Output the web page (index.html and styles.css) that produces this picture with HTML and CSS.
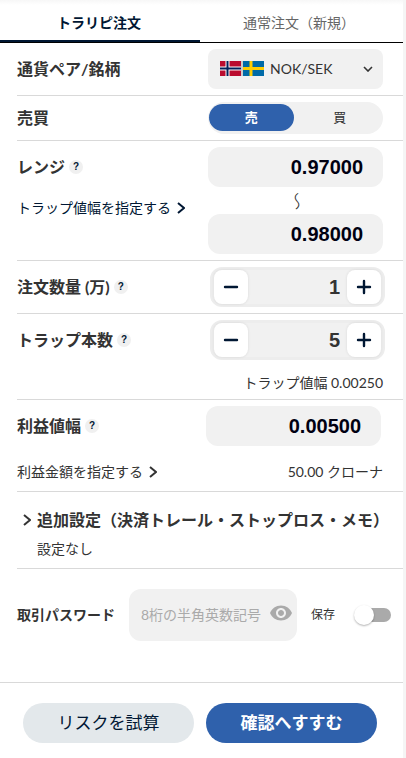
FILE: index.html
```html
<!DOCTYPE html>
<html lang="ja">
<head>
    <meta charset="UTF-8">
    <meta name="viewport" content="width=device-width, initial-scale=1.0">
    <title>トラリピ注文</title>
    <link rel="stylesheet" href="styles.css">
</head>
<body>
    <div class="order-panel">
        <nav class="tabs">
            <button type="button" class="tab active">トラリピ注文</button>
            <button type="button" class="tab">通常注文（新規）</button>
        </nav>

        <form class="order-form" id="orderForm">
            <div class="form-row">
                <label class="row-label" for="pair">通貨ペア/銘柄</label>
                <div class="field pair-select">
                    <select id="pair" name="pair">
                        <option value="noksek" selected>NOK/SEK</option>
                    </select>
                    <svg class="flags" width="44" height="15" viewBox="0 0 44 15">
                        <rect width="21" height="15" fill="#ba0c2f"/>
                        <path d="M0 7.5h21M7.5 0v15" stroke="#fff" stroke-width="4"/>
                        <path d="M0 7.5h21M7.5 0v15" stroke="#00205b" stroke-width="2"/>
                        <rect x="21" width="2" height="15" fill="#ccc"/>
                        <rect x="23" width="21" height="15" fill="#006aa7"/>
                        <path d="M23 7.5h21M31 0v15" stroke="#fecc02" stroke-width="3"/>
                    </svg>
                    <svg class="arrow-down" width="10" height="6" viewBox="0 0 10 6">
                        <path d="M1 1l4 4 4-4" fill="none" stroke="#333" stroke-width="1.6"/>
                    </svg>
                </div>
            </div>

            <div class="form-row">
                <span class="row-label" id="sideLabel">売買</span>
                <div class="field side-switch" role="radiogroup" aria-labelledby="sideLabel">
                    <input type="radio" id="sell" name="side" value="sell" checked>
                    <label for="sell">売</label>
                    <input type="radio" id="buy" name="side" value="buy">
                    <label for="buy">買</label>
                </div>
            </div>

            <div class="form-row">
                <div class="row-left">
                    <div class="label-line">
                        <label class="row-label" for="rangeLow">レンジ</label>
                        <button type="button" class="help">?</button>
                    </div>
                    <a class="mode-link navy" href="#">トラップ値幅を指定する
                        <svg class="arrow-right" width="8" height="12" viewBox="0 0 8 12"><path d="M1 1l6 5-6 5"/></svg>
                    </a>
                </div>
                <div class="field range-field">
                    <input type="text" class="price-input" id="rangeLow" name="rangeLow" value="0.97000">
                    <span class="range-mark">〜</span>
                    <input type="text" class="price-input" id="rangeHigh" name="rangeHigh" value="0.98000" aria-label="レンジ">
                </div>
            </div>

            <div class="form-row wide">
                <div class="label-line">
                    <label class="row-label" for="amount">注文数量 (万)</label>
                    <button type="button" class="help">?</button>
                </div>
                <div class="field stepper">
                    <button type="button" class="step-button"><svg width="16" height="16" viewBox="0 0 16 16"><path d="M2 8h12"/></svg></button>
                    <input type="text" id="amount" name="amount" value="1">
                    <button type="button" class="step-button"><svg width="16" height="16" viewBox="0 0 16 16"><path d="M2 8h12M8 2v12"/></svg></button>
                </div>
            </div>

            <div class="form-row wide">
                <div class="label-line">
                    <label class="row-label" for="traps">トラップ本数</label>
                    <button type="button" class="help">?</button>
                </div>
                <div class="field stepper">
                    <button type="button" class="step-button"><svg width="16" height="16" viewBox="0 0 16 16"><path d="M2 8h12"/></svg></button>
                    <input type="text" id="traps" name="traps" value="5">
                    <button type="button" class="step-button"><svg width="16" height="16" viewBox="0 0 16 16"><path d="M2 8h12M8 2v12"/></svg></button>
                </div>
                <p class="row-note trap-width">トラップ値幅 0.00250</p>
            </div>

            <div class="form-row profit-row">
                <div class="label-line">
                    <label class="row-label" for="profit">利益値幅</label>
                    <button type="button" class="help">?</button>
                </div>
                <div class="field">
                    <input type="text" class="price-input" id="profit" name="profit" value="0.00500">
                </div>
                <div class="row-note profit-note">
                    <a class="mode-link" href="#">利益金額を指定する
                        <svg class="arrow-right" width="8" height="12" viewBox="0 0 8 12"><path d="M1 1l6 5-6 5"/></svg>
                    </a>
                    <span>50.00 クローナ</span>
                </div>
            </div>

            <div class="form-row extra">
                <button type="button" class="extra-toggle">
                    <svg class="arrow-right" width="8" height="12" viewBox="0 0 8 12"><path d="M1 1l6 5-6 5"/></svg>
                    追加設定（決済トレール・ストップロス・メモ）
                </button>
                <p class="extra-status">設定なし</p>
            </div>

            <div class="password-row">
                <label class="password-label" for="password">取引パスワード</label>
                <div class="password-box">
                    <input type="password" id="password" name="password" placeholder="8桁の半角英数記号">
                    <button type="button" class="eye" aria-label="表示">
                        <svg width="24" height="24" viewBox="0 0 24 24">
                            <path fill="#aaa" d="M12 4.5C7 4.5 2.73 7.61 1 12c1.73 4.39 6 7.5 11 7.5s9.27-3.11 11-7.5c-1.73-4.39-6-7.5-11-7.5zM12 17c-2.76 0-5-2.24-5-5s2.24-5 5-5 5 2.24 5 5-2.24 5-5 5zm0-8c-1.66 0-3 1.34-3 3s1.34 3 3 3 3-1.34 3-3-1.34-3-3-3z"/>
                        </svg>
                    </button>
                </div>
                <label class="save-label" for="save">保存</label>
                <input type="checkbox" class="save-switch" id="save" name="save">
            </div>
        </form>

        <footer class="actions">
            <button type="button" class="action">リスクを試算</button>
            <button type="submit" form="orderForm" class="action primary">確認へすすむ</button>
        </footer>
    </div>
</body>
</html>
```
FILE: styles.css
```css
* {
    box-sizing: border-box;
}

body {
    margin: 0;
    padding-right: 3px;
    background-color: #f5f5f5;
    color: #333;
    font-family: Lato, "Noto Sans CJK JP", sans-serif;
    font-size: 14px;
    line-height: 20px;
}

button,
input,
select {
    margin: 0;
    padding: 0;
    border: none;
    background: none;
    color: inherit;
    font: inherit;
}

button {
    cursor: pointer;
}

p {
    margin: 0;
}

.order-panel {
    display: flex;
    flex-direction: column;
    min-height: 100vh;
    background: linear-gradient(#f7f7f7, #fff 5px);
}

/* tabs */
.tabs {
    display: flex;
    padding-right: 3px;
    border-bottom: 1px solid #000;
}

.tab {
    flex: 1;
    padding: 13px 2px 7px 0;
    border-bottom: 2px solid transparent;
    color: #666;
}

.tab.active {
    border-bottom-color: #001733;
    color: #001733;
    font-weight: bold;
}

/* rows */
.form-row {
    display: grid;
    grid-template-columns: 1fr 175px;
    margin-left: 17px;
    padding: 6px 20px 6px 0;
    border-bottom: 1px solid #d9d9d9;
    align-items: start;
}

.form-row.wide {
    padding-right: 18px;
}

.row-label {
    align-self: center;
    font-size: 16px;
    font-weight: bold;
}

.label-line {
    display: flex;
    align-items: center;
    gap: 4px;
    height: 40px;
}

.help {
    width: 14px;
    height: 14px;
    border-radius: 50%;
    background-color: #f0f0f0;
    color: #001733;
    font-family: "Liberation Sans", sans-serif;
    font-size: 10px;
    font-weight: bold;
    line-height: 14px;
}

/* currency pair */
.pair-select {
    position: relative;
}

.pair-select select {
    display: block;
    width: 100%;
    height: 40px;
    padding-left: 62px;
    border-radius: 8px;
    background-color: #f1f1f1;
    appearance: none;
}

.flags {
    position: absolute;
    top: 12px;
    left: 12px;
    pointer-events: none;
}

.arrow-down {
    position: absolute;
    top: 17px;
    right: 10px;
    pointer-events: none;
}

/* sell / buy */
.side-switch {
    display: flex;
    gap: 4px;
    height: 32px;
    padding: 2px 1px 3px;
    border-radius: 16px;
    background-color: #f1f1f1;
}

.side-switch input {
    position: absolute;
    opacity: 0;
}

.side-switch label {
    flex: 1;
    border-radius: 14px;
    font-size: 13px;
    line-height: 27px;
    text-align: center;
    cursor: pointer;
}

.side-switch input:checked + label {
    background-color: #2f61ac;
    color: #fff;
    font-weight: bold;
}

/* prices */
.price-input {
    display: block;
    width: 100%;
    height: 40px;
    padding-right: 20px;
    border-radius: 12px;
    background-color: #f1f1f1;
    color: #001;
    font-family: "Liberation Sans", sans-serif;
    font-size: 20px;
    font-weight: bold;
    text-align: right;
}

.range-mark {
    display: block;
    width: 100%;
    height: 27px;
    font-size: 18px;
    font-weight: 300;
    line-height: 175px;
    text-align: center;
    writing-mode: vertical-rl;
}

.mode-link {
    display: flex;
    align-items: center;
    gap: 6px;
    color: #333;
    text-decoration: none;
}

.mode-link.navy {
    margin-top: 11px;
    color: #001733;
}

.arrow-right {
    fill: none;
    stroke: currentColor;
    stroke-width: 2;
}

/* stepper */
.stepper {
    display: flex;
    align-items: center;
    height: 40px;
    padding: 0 1px;
    border: 3px solid #ededed;
    border-radius: 12px;
    background-color: #f1f1f1;
}

.stepper input {
    flex: 1;
    min-width: 0;
    padding-right: 7px;
    font-family: "Liberation Sans", sans-serif;
    font-size: 20px;
    font-weight: bold;
    text-align: right;
}

.step-button {
    display: flex;
    align-items: center;
    justify-content: center;
    width: 34px;
    height: 34px;
    border-radius: 8px;
    background-color: #fff;
    box-shadow: 0 0 3px rgba(0, 0, 0, 0.1);
}

.step-button path {
    stroke: #001733;
    stroke-width: 2.4;
    stroke-linecap: round;
}

.row-note {
    grid-column: 1 / -1;
}

.trap-width {
    margin: 13px 2px 0 0;
    text-align: right;
}

.profit-row .field {
    margin: 0 2px 0 -2px;
}

.profit-note {
    display: flex;
    justify-content: space-between;
    margin: 16px 0 3px;
}

/* additional settings */
.extra {
    display: block;
    padding: 18px 0 9px 6px;
}

.extra-toggle {
    display: flex;
    align-items: center;
    gap: 6px;
    font-size: 16px;
    font-weight: bold;
    white-space: nowrap;
}

.extra-status {
    margin: 9px 0 0 14px;
}

/* password */
.password-row {
    display: flex;
    align-items: center;
    padding: 20px 12px 20px 17px;
}

.password-label {
    font-weight: bold;
    white-space: nowrap;
}

.password-box {
    display: flex;
    flex: 1;
    align-items: center;
    min-width: 0;
    height: 52px;
    margin: 0 14px;
    padding: 0 4px 0 12px;
    border-radius: 12px;
    background-color: #f1f1f1;
}

.password-box input {
    flex: 1;
    min-width: 0;
}

.password-box input::placeholder {
    color: #aaa;
}

.eye {
    display: flex;
    margin-bottom: 4px;
}

.save-label {
    font-size: 12px;
}

.save-switch {
    position: relative;
    width: 34px;
    height: 14px;
    margin-left: 22px;
    border-radius: 7px;
    background-color: #aaa;
    appearance: none;
    cursor: pointer;
}

.save-switch::before {
    content: "";
    position: absolute;
    top: -3px;
    left: -3px;
    width: 20px;
    height: 20px;
    border-radius: 50%;
    background-color: #fff;
    box-shadow: 0 1px 2px rgba(0, 0, 0, 0.3);
}

/* footer */
.actions {
    display: flex;
    gap: 12px;
    margin-top: auto;
    padding: 20px 26px 15px 23px;
    border-top: 1px solid #d9d9d9;
}

.action {
    flex: 1;
    height: 40px;
    border-radius: 20px;
    background-color: #e3e8eb;
    color: #001733;
    font-size: 17px;
}

.action.primary {
    background-color: #2f61ac;
    color: #fff;
    font-weight: bold;
}
```
